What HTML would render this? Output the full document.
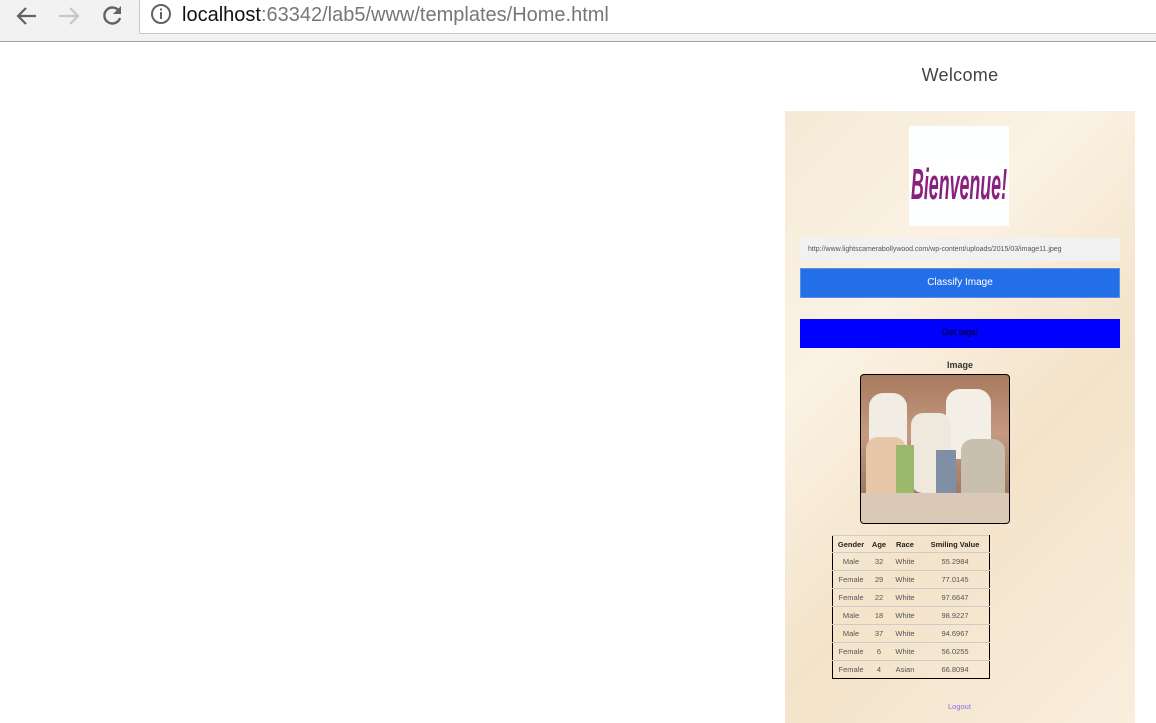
<!DOCTYPE html>
<html><head><style>
body{margin:0;width:1156px;height:723px;overflow:hidden;background:#fff;font-family:"Liberation Sans",sans-serif;position:relative}
.bar{position:absolute;left:0;top:0;width:1156px;height:41px;background:#f2f2f2;border-bottom:1px solid #a0a0a0}
.addr{position:absolute;left:139px;top:-1px;width:1030px;height:33px;background:#fff;border:1px solid #c8c8c8;border-radius:2px}
.url{position:absolute;left:182px;top:4px;font-size:20px;color:#777}
.url b{font-weight:normal;color:#111}
.panel{position:absolute;left:785px;top:111px;width:350px;height:612px;background:linear-gradient(135deg,#f6ead6,#fbf2e4 30%,#f3e3c9 60%,#f9eedd)}
.abs{position:absolute}
td{padding:0}
</style></head><body>
<div class="bar">
<svg class="abs" style="left:14px;top:4px" width="26" height="24" viewBox="0 0 26 24"><path d="M22 12H5M12 4l-8 8 8 8" stroke="#5f6368" stroke-width="2.2" fill="none"/></svg>
<svg class="abs" style="left:56px;top:4px" width="26" height="24" viewBox="0 0 26 24"><path d="M3 12h17M14 4l8 8-8 8" stroke="#c6c6c6" stroke-width="2.2" fill="none"/></svg>
<svg class="abs" style="left:99px;top:2px" width="26" height="26" viewBox="0 0 26 26"><path d="M20 9A8 8 0 1 0 21 16" stroke="#5f6368" stroke-width="2.4" fill="none"/><path d="M22 4v8h-8z" fill="#5f6368"/></svg>
<div class="addr"></div>
<svg class="abs" style="left:150px;top:3px" width="22" height="22" viewBox="0 0 22 22"><circle cx="11" cy="11" r="9" stroke="#5f6368" stroke-width="2" fill="none"/><rect x="10" y="9" width="2" height="7" fill="#5f6368"/><rect x="10" y="5.5" width="2" height="2" fill="#5f6368"/></svg>
<div class="url"><b>localhost</b>:63342/lab5/www/templates/Home.html</div>
</div>
<div class="abs" style="left:785px;width:350px;top:65px;text-align:center;font-size:18px;color:#444;letter-spacing:.3px">Welcome</div>
<div class="panel">
<svg class="abs" style="left:124px;top:15px" width="100" height="100"><rect width="100" height="100" fill="#fdfefe"/><text x="2" y="73" textLength="96" lengthAdjust="spacingAndGlyphs" font-family="Liberation Sans" font-style="italic" font-weight="bold" font-size="44" fill="#8a1f7f">Bienvenue!</text></svg>
<div class="abs" style="left:15px;top:127px;width:320px;height:23px;background:#f1f1f1;font-size:7px;color:#555;line-height:23px;text-indent:8px">http://www.lightscamerabollywood.com/wp-content/uploads/2015/03/image11.jpeg</div>
<div class="abs" style="left:15px;top:157px;width:318px;height:28px;background:#236fe8;border:1px solid #5a8fe8;color:#fff;font-size:10px;text-align:center;line-height:28px">Classify Image</div>
<div class="abs" style="left:15px;top:208px;width:320px;height:29px;background:#0000ff;color:#000;font-size:9px;text-align:center;line-height:27px">Get tags!</div>
<div class="abs" style="left:0;width:350px;top:249px;text-align:center;font-size:9px;font-weight:bold;color:#333">Image</div>
<div class="abs" style="left:75px;top:263px;width:148px;height:148px;border:1px solid #000;border-radius:4px;overflow:hidden;background:linear-gradient(#a87a60,#c49a80 40%,#8a6a58)">
<div class="abs" style="left:8px;top:18px;width:38px;height:60px;background:#f2ede4;border-radius:14px 14px 4px 4px"></div>
<div class="abs" style="left:85px;top:14px;width:45px;height:70px;background:#f4efe6;border-radius:14px 14px 4px 4px"></div>
<div class="abs" style="left:50px;top:38px;width:40px;height:80px;background:#efe8dc;border-radius:12px"></div>
<div class="abs" style="left:5px;top:62px;width:40px;height:86px;background:#e8c7a8;border-radius:12px"></div>
<div class="abs" style="left:100px;top:64px;width:44px;height:84px;background:#c8bfae;border-radius:12px"></div>
<div class="abs" style="left:35px;top:70px;width:18px;height:60px;background:#9cb86c"></div>
<div class="abs" style="left:75px;top:75px;width:20px;height:45px;background:#7e8fa6"></div>
<div class="abs" style="left:0;top:118px;width:148px;height:30px;background:#d9c9b6"></div>
</div>
<table class="abs" style="left:47px;top:424px;border-collapse:collapse;border:1px solid #000;border-top:1px solid #ccc;font-size:7.5px;color:#555;text-align:center">
<tr style="height:17px;font-weight:bold;color:#222"><td style="width:36px">Gender</td><td style="width:20px">Age</td><td style="width:32px">Race</td><td style="width:68px">Smiling Value</td></tr>
<tr style="height:18px;border-top:1px solid #ccc"><td>Male</td><td>32</td><td>White</td><td>55.2984</td></tr>
<tr style="height:18px;border-top:1px solid #ccc"><td>Female</td><td>29</td><td>White</td><td>77.0145</td></tr>
<tr style="height:18px;border-top:1px solid #ccc"><td>Female</td><td>22</td><td>White</td><td>97.6647</td></tr>
<tr style="height:18px;border-top:1px solid #ccc"><td>Male</td><td>18</td><td>White</td><td>98.9227</td></tr>
<tr style="height:18px;border-top:1px solid #ccc"><td>Male</td><td>37</td><td>White</td><td>94.6967</td></tr>
<tr style="height:18px;border-top:1px solid #ccc"><td>Female</td><td>6</td><td>White</td><td>56.0255</td></tr>
<tr style="height:18px;border-top:1px solid #ccc"><td>Female</td><td>4</td><td>Asian</td><td>66.8094</td></tr>
</table>
<div class="abs" style="left:163px;top:591px;font-size:7.5px;color:#8a6cf0">Logout</div>
</div>
</body></html>
